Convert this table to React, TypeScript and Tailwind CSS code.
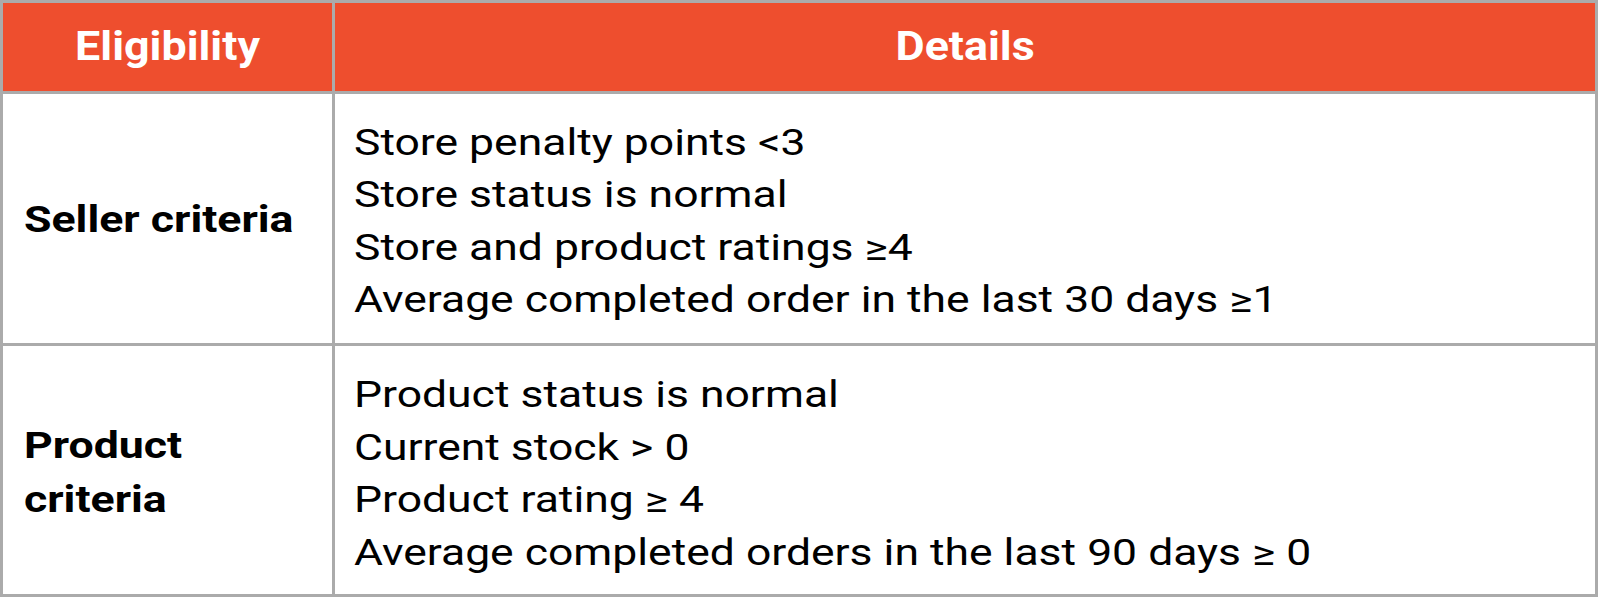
import React from "react";

const rows = [
  {
    label: ["Seller criteria"],
    h: "h-[249px]",
    items: [
      "Store penalty points <3",
      "Store status is normal",
      "Store and product ratings ≥4",
      "Average completed order in the last 30 days ≥1",
    ],
    last: false,
  },
  {
    label: ["Product", "criteria"],
    h: "h-[248px]",
    items: [
      "Product status is normal",
      "Current stock > 0",
      "Product rating ≥ 4",
      "Average completed orders in the last 90 days ≥ 0",
    ],
    last: true,
  },
];

export default function App() {
  return (
    <div className="w-[1600px] h-[604px] bg-white overflow-hidden">
      <div className="w-[1598px] border-[3px] border-[#ababab] font-['Roboto',sans-serif] text-black">
        <div className="flex h-[91px] bg-[#ee4e2e] border-b-[3px] border-[#ababab] text-white font-bold text-[40px]">
          <div className="w-[332px] border-r-[3px] border-[#ababab] flex items-center justify-center">
            <span className="inline-block scale-x-[1.12]">Eligibility</span>
          </div>
          <div className="flex-1 flex items-center justify-center">
            <span className="inline-block scale-x-[1.12]">Details</span>
          </div>
        </div>
        {rows.map((r) => (
          <div
            key={r.label.join(" ")}
            className={`flex ${r.last ? "" : "border-b-[3px] border-[#ababab]"}`}
          >
            <div
              className={`w-[332px] ${r.h} border-r-[3px] border-[#ababab] flex flex-col justify-center items-start pl-[21px] font-bold text-[36px] ${
                r.last ? "leading-[54px] pt-[6px]" : "leading-[53px] pt-[4px]"
              }`}
            >
              {r.label.map((l) => (
                <div key={l} className="origin-left scale-x-[1.24] whitespace-nowrap">
                  {l}
                </div>
              ))}
            </div>
            <div
              className={`flex-1 ${r.h} flex flex-col justify-center items-start pl-[19px] text-[36px] leading-[52.5px] ${
                r.last ? "pt-[8px]" : "pt-[6px]"
              }`}
            >
              {r.items.map((t) => (
                <div key={t} className="origin-left scale-x-[1.235] whitespace-nowrap">
                  {t}
                </div>
              ))}
            </div>
          </div>
        ))}
      </div>
    </div>
  );
}
